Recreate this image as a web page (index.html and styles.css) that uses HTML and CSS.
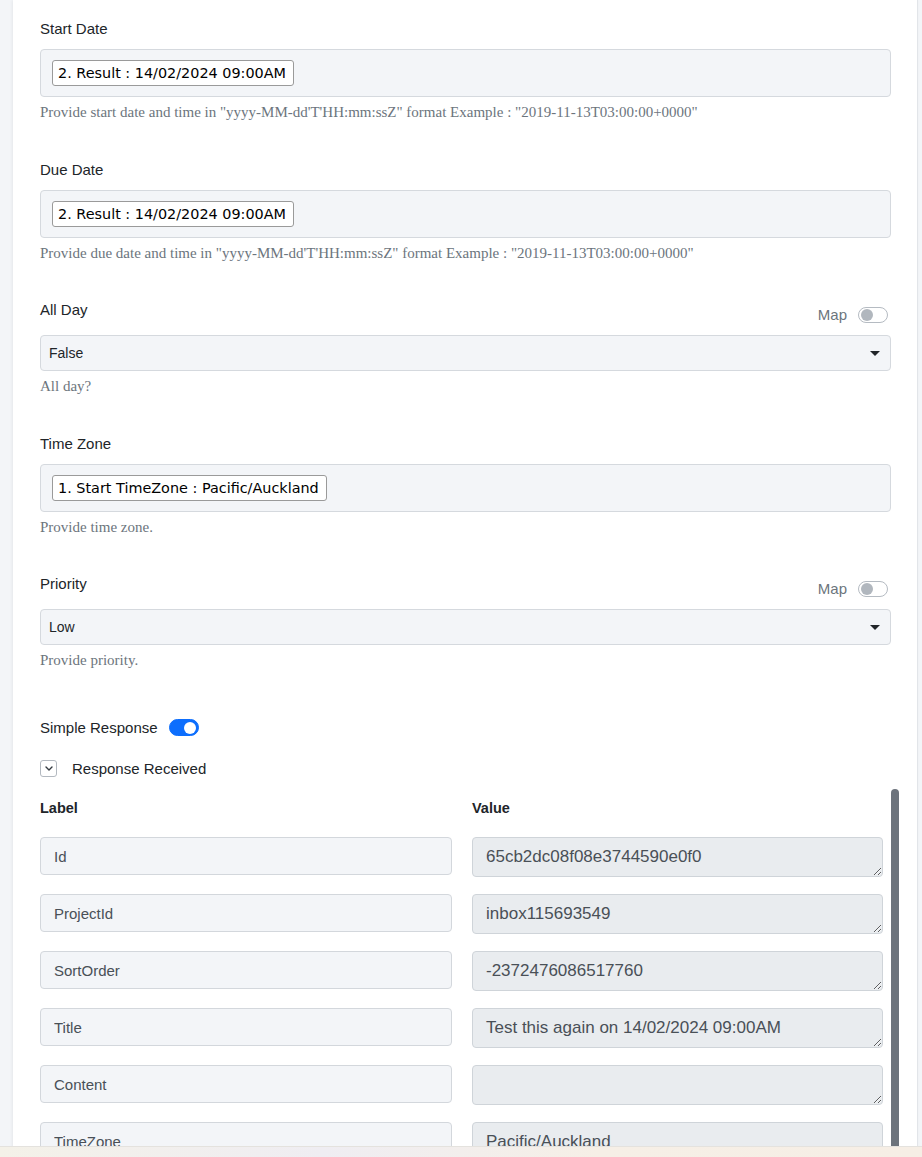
FILE: index.html
```html
<!DOCTYPE html>
<html lang="en">
<head>
  <meta charset="UTF-8" />
  <meta name="viewport" content="width=device-width, initial-scale=1.0"/>
  <title>Create Task</title>
  <link rel="stylesheet" href="styles.css">
</head>
<body>
  <div class="panel">
    <!-- Start date -->
    <div class="field">
      <div class="field-head">
        <label class="field-label">Start Date</label>
      </div>
      <div class="token-box">
        <span class="token">2. Result : 14/02/2024 09:00AM</span>
      </div>
      <p class="hint">Provide start date and time in "yyyy-MM-dd'T'HH:mm:ssZ" format Example : "2019-11-13T03:00:00+0000"</p>
    </div>

    <!-- Due date -->
    <div class="field">
      <div class="field-head">
        <label class="field-label">Due Date</label>
      </div>
      <div class="token-box">
        <span class="token">2. Result : 14/02/2024 09:00AM</span>
      </div>
      <p class="hint">Provide due date and time in "yyyy-MM-dd'T'HH:mm:ssZ" format Example : "2019-11-13T03:00:00+0000"</p>
    </div>

    <!-- All day -->
    <div class="field">
      <div class="field-head">
        <label class="field-label">All Day</label>
        <div class="map-switch">
          <span>Map</span>
          <span class="toggle"></span>
        </div>
      </div>
      <div class="select">
        <span>False</span>
        <svg class="caret" width="10" height="5" viewBox="0 0 10 5"><path d="M0 0h10L5 5z" fill="#212529"/></svg>
      </div>
      <p class="hint">All day?</p>
    </div>

    <!-- Time zone -->
    <div class="field">
      <div class="field-head">
        <label class="field-label">Time Zone</label>
      </div>
      <div class="token-box">
        <span class="token">1. Start TimeZone : Pacific/Auckland</span>
      </div>
      <p class="hint">Provide time zone.</p>
    </div>

    <!-- Priority -->
    <div class="field">
      <div class="field-head">
        <label class="field-label">Priority</label>
        <div class="map-switch">
          <span>Map</span>
          <span class="toggle"></span>
        </div>
      </div>
      <div class="select">
        <span>Low</span>
        <svg class="caret" width="10" height="5" viewBox="0 0 10 5"><path d="M0 0h10L5 5z" fill="#212529"/></svg>
      </div>
      <p class="hint">Provide priority.</p>
    </div>

    <!-- Response section -->
    <div class="simple-response">
      <span>Simple Response</span>
      <span class="toggle on"></span>
    </div>

    <div class="collapse-head">
      <span class="chevron-box">
        <svg width="8" height="5" viewBox="0 0 8 5"><path d="M1 1l3 3 3-3" fill="none" stroke="#343a40" stroke-width="1.4" stroke-linecap="round" stroke-linejoin="round"/></svg>
      </span>
      <span>Response Received</span>
    </div>

    <div class="response-wrap">
      <div class="response-grid">
        <div class="col-head">Label</div>
        <div class="col-head">Value</div>

        <input class="key-input" type="text" value="Id" readonly>
        <textarea class="value-input" readonly>65cb2dc08f08e3744590e0f0</textarea>

        <input class="key-input" type="text" value="ProjectId" readonly>
        <textarea class="value-input" readonly>inbox115693549</textarea>

        <input class="key-input" type="text" value="SortOrder" readonly>
        <textarea class="value-input" readonly>-2372476086517760</textarea>

        <input class="key-input" type="text" value="Title" readonly>
        <textarea class="value-input" readonly>Test this again on 14/02/2024 09:00AM</textarea>

        <input class="key-input" type="text" value="Content" readonly>
        <textarea class="value-input" readonly></textarea>

        <input class="key-input" type="text" value="TimeZone" readonly>
        <textarea class="value-input" readonly>Pacific/Auckland</textarea>
      </div>
      <!-- scroll thumb of the response list -->
      <div class="scroll-thumb"></div>
    </div>
  </div>

  <!-- bottom strip of the host app -->
  <div class="footer-strip"></div>
</body>
</html>
```

FILE: styles.css
```css
/*
  Page frame
*/
* {
  box-sizing: border-box;
}
html,
body {
  height: 100%;
  overflow: hidden;
}
body {
  margin: 0;
  background: #f3f5f8;
  font-family: "Liberation Sans", Arial, sans-serif;
  color: #212529;
}
.panel {
  margin-left: 13px;
  width: 905px;
  min-height: 100%;
  background: #ffffff;
  border-right: 1px solid #e2e5e9;
  box-shadow: -1px 0 3px rgba(0, 0, 0, 0.06);
  padding: 20px 26px 0 27px;
}
/*
  Form fields
*/
.field {
  margin-bottom: 39.5px;
}
.field-head {
  display: flex;
  justify-content: space-between;
  align-items: flex-start;
  margin-bottom: 12px;
}
.field-label {
  font-size: 15px;
  line-height: 17px;
}
.map-switch {
  display: flex;
  align-items: center;
  gap: 11px;
  margin-top: 5px;
  margin-right: 3px;
  font-size: 15px;
  line-height: 17px;
  color: #6c757d;
}
.toggle {
  position: relative;
  display: inline-block;
  width: 30px;
  height: 16px;
  border: 1px solid #b5bbc2;
  border-radius: 9px;
  background: #ffffff;
}
.toggle::after {
  content: "";
  position: absolute;
  top: 1px;
  left: 2px;
  width: 12px;
  height: 12px;
  border-radius: 50%;
  background: #b1b7be;
}
.toggle.on {
  height: 17px;
  border-color: #0d6efd;
  background: #0d6efd;
}
.toggle.on::after {
  left: auto;
  right: 2px;
  top: 1.5px;
  background: #ffffff;
}
/* box holding mapped tokens */
.token-box {
  height: 48px;
  padding: 10px 11px;
  background: #f3f5f8;
  border: 1px solid #d5d9de;
  border-radius: 4px;
}
.token {
  display: inline-block;
  height: 26px;
  padding: 0 7px 0 5px;
  line-height: 24px;
  font-family: "DejaVu Sans", Verdana, sans-serif;
  font-size: 14.4px;
  color: #000000;
  background: #ffffff;
  border: 1px solid #9a9a9a;
  border-radius: 3px;
}
.select {
  display: flex;
  align-items: center;
  justify-content: space-between;
  height: 36px;
  padding: 0 10px 0 8px;
  background: #f3f5f8;
  border: 1px solid #d5d9de;
  border-radius: 4px;
  font-size: 14px;
}
.caret {
  display: block;
}
.hint {
  margin: 7px 0 0;
  font-family: "Liberation Serif", "Times New Roman", serif;
  font-size: 15px;
  line-height: 17px;
  color: #6c757d;
}
/*
  Response section
*/
.simple-response {
  display: flex;
  align-items: center;
  gap: 11px;
  margin-top: 50px;
  font-size: 15px;
  line-height: 17px;
}
.collapse-head {
  display: flex;
  align-items: center;
  gap: 15px;
  margin-top: 24px;
  font-size: 15px;
  line-height: 17px;
}
.chevron-box {
  display: flex;
  align-items: center;
  justify-content: center;
  width: 17px;
  height: 17px;
  border: 1px solid #b3b9c0;
  border-radius: 3px;
}
.response-wrap {
  display: flex;
  align-items: flex-start;
  gap: 8px;
  margin-top: 12px;
  margin-right: -7px;
}
.scroll-thumb {
  flex: none;
  width: 8px;
  height: 380px;
  background: #6c737c;
  border-radius: 4px 4px 0 0;
}
.response-grid {
  display: grid;
  grid-template-columns: 412px 411px;
  column-gap: 20px;
  row-gap: 17px;
  align-items: start;
  padding-top: 11px;
}
.col-head {
  font-size: 14.5px;
  font-weight: bold;
  line-height: 17px;
  margin-bottom: 3px;
}
.key-input {
  height: 38px;
  width: 100%;
  padding: 0 13px;
  font-family: "Liberation Sans", Arial, sans-serif;
  font-size: 15px;
  color: #495057;
  background: #f3f5f8;
  border: 1px solid #d3d7dc;
  border-radius: 4px;
  outline: none;
}
.value-input {
  display: block;
  height: 40px;
  width: 100%;
  padding: 9px 13px;
  font-family: "Liberation Sans", Arial, sans-serif;
  font-size: 17px;
  line-height: 20px;
  color: #495057;
  background: #e9ecef;
  border: 1px solid #cfd4d9;
  border-radius: 4px;
  outline: none;
  overflow: hidden;
}
/*
  Fixed strip along the bottom of the window
*/
.footer-strip {
  position: fixed;
  left: 0;
  right: 0;
  bottom: 0;
  height: 11px;
  border-top: 1px solid #e4e2de;
  background: linear-gradient(90deg, #f4f1e8 0%, #efedf2 35%, #f6efe6 65%, #f6eee5 100%);
}
```
